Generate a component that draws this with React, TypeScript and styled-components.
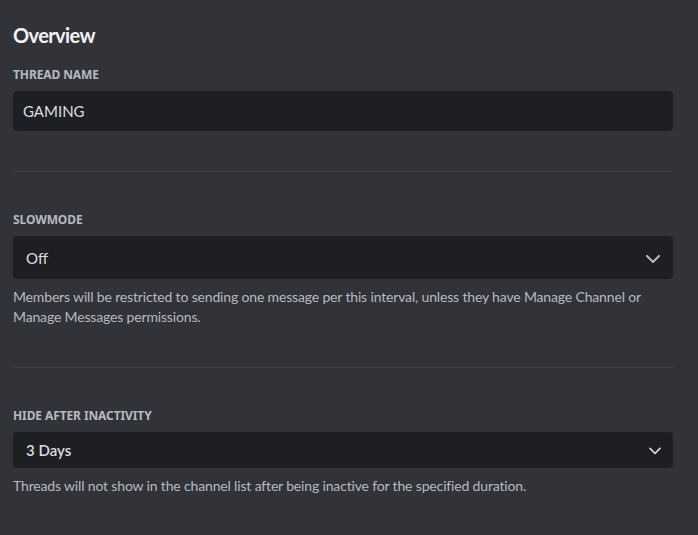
import React from "react";
import styled, { createGlobalStyle } from "styled-components";

const Global = createGlobalStyle`
  html, body { margin: 0; padding: 0; background: #313338; }
  body { font-family: Lato, "Noto Sans", sans-serif; }
  * { box-sizing: border-box; }
`;

const Page = styled.div`
  min-height: 535px;
  background: #313338;
  padding: 23px 25px 0 13px;
  display: flex;
  flex-direction: column;
`;

const Title = styled.h2`
  margin: 0 0 20px;
  font-family: Lato, "Noto Sans", sans-serif;
  font-size: 20px;
  line-height: 24px;
  font-weight: 700;
  letter-spacing: -0.6px;
  color: #f2f3f5;
`;

const Label = styled.div`
  font-family: "Noto Sans", sans-serif;
  font-size: 12px;
  line-height: 16px;
  font-weight: 700;
  letter-spacing: -0.1px;
  text-transform: uppercase;
  color: #b5bac1;
  margin-bottom: 8px;
`;

const TextInput = styled.div`
  height: 40px;
  border-radius: 4px;
  background: #1e1f22;
  color: #dbdee1;
  font-family: Lato, sans-serif;
  font-size: 15px;
  display: flex;
  align-items: center;
  padding: 0 10px;
`;

const Select = styled.div<{ $big: boolean }>`
  height: ${(p) => (p.$big ? 43 : 36)}px;
  border-radius: 4px;
  background: #1e1f22;
  color: #dbdee1;
  font-family: Lato, sans-serif;
  font-size: 15px;
  font-weight: ${(p) => (p.$big ? 400 : 600)};
  display: flex;
  align-items: center;
  justify-content: space-between;
  padding: 0 8px 0 13px;
`;

const Help = styled.div`
  margin-top: 8px;
  font-family: Lato, sans-serif;
  font-size: 14px;
  line-height: 20px;
  letter-spacing: -0.16px;
  color: #b5bac1;
`;

const Divider = styled.hr`
  border: none;
  height: 1px;
  background: #3f4147;
  margin: 40px 0;
`;

const Chevron = ({ size, color }: { size: number; color: string }) => (
  <svg width={size} height={size} viewBox="0 0 24 24" fill="none">
    <path
      fill={color}
      d="M5.3 9.3a1 1 0 0 1 1.4 0l5.3 5.29 5.3-5.3a1 1 0 1 1 1.4 1.42l-6 6a1 1 0 0 1-1.4 0l-6-6a1 1 0 0 1 0-1.42Z"
    />
  </svg>
);

export default function App() {
  return (
    <>
      <Global />
      <Page>
        <Title>Overview</Title>
        <Label>Thread Name</Label>
        <TextInput>GAMING</TextInput>
        <Divider />
        <Label>Slowmode</Label>
        <Select $big>
          <span>Off</span>
          <Chevron size={24} color="#b5bac1" />
        </Select>
        <Help>
          Members will be restricted to sending one message per this interval, unless they have Manage Channel or
          Manage Messages permissions.
        </Help>
        <Divider />
        <Label>Hide After Inactivity</Label>
        <Select $big={false}>
          <span>3 Days</span>
          <Chevron size={20} color="#dbdee1" />
        </Select>
        <Help>Threads will not show in the channel list after being inactive for the specified duration.</Help>
      </Page>
    </>
  );
}
